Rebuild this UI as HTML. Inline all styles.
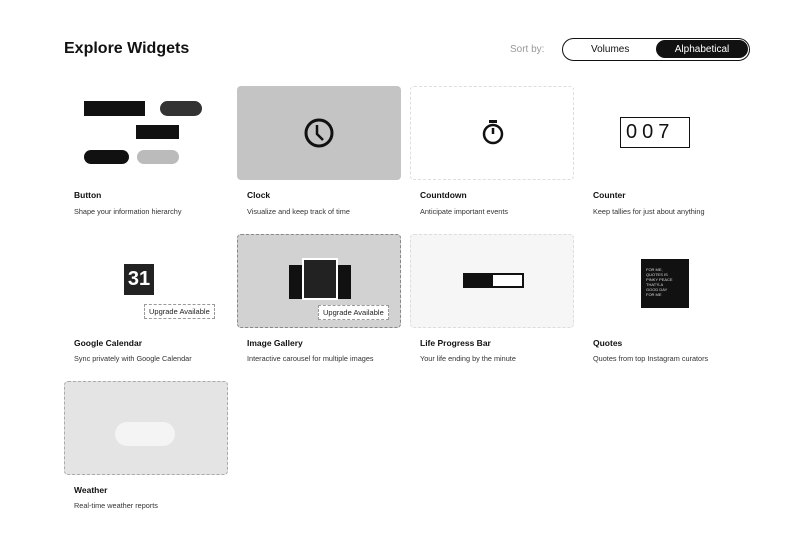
<!DOCTYPE html>
<html><head><meta charset="utf-8"><style>
*{margin:0;padding:0;box-sizing:border-box}
body{width:810px;height:546px;background:#fff;font-family:"Liberation Sans",sans-serif;color:#111;position:relative;overflow:hidden}
.abs{position:absolute}
h1{position:absolute;left:64px;top:40px;font-size:16px;font-weight:bold}
.sort{left:510px;top:44px;font-size:10px;color:#999}
.tog{left:562px;top:38px;width:188px;height:23px;border:1.5px solid #111;border-radius:12px}
.tog .v{position:absolute;left:28px;top:5px;font-size:10px}
.tog .a{position:absolute;right:1px;top:1px;width:92px;height:18px;background:#111;border-radius:10px;color:#fff;font-size:10px;text-align:center;line-height:19px}
.img{position:absolute;width:164px;height:94px;border-radius:4px}
.t{position:absolute;font-size:8.5px;font-weight:bold}
.d{position:absolute;font-size:7.3px;color:#333}
.up{position:absolute;background:#fff;border:1px dashed #999;font-size:7.5px;padding:2px 4px;color:#222}
</style></head><body>
<h1>Explore Widgets</h1>
<div class="abs sort">Sort by:</div>
<div class="abs tog"><span class="v">Volumes</span><span class="a">Alphabetical</span></div>

<!-- row1 -->
<div class="img" style="left:64px;top:86px">
 <div class="abs" style="left:20px;top:15px;width:61px;height:15px;background:#111"></div>
 <div class="abs" style="left:96px;top:15px;width:42px;height:15px;background:#333;border-radius:8px"></div>
 <div class="abs" style="left:72px;top:39px;width:43px;height:14px;background:#111"></div>
 <div class="abs" style="left:20px;top:64px;width:45px;height:14px;background:#111;border-radius:8px"></div>
 <div class="abs" style="left:73px;top:64px;width:42px;height:14px;background:#bbb;border-radius:8px"></div>
</div>
<div class="img" style="left:237px;top:86px;background:#c4c4c4">
 <svg class="abs" style="left:66px;top:30px" width="32" height="34" viewBox="0 0 32 34"><circle cx="16" cy="17" r="13" fill="none" stroke="#111" stroke-width="3"/><path d="M14 9v9l6 6" fill="none" stroke="#111" stroke-width="2.5"/></svg>
</div>
<div class="img" style="left:410px;top:86px;border:1px dashed #ddd">
 <svg class="abs" style="left:70px;top:32px" width="24" height="26" viewBox="0 0 24 26"><rect x="8" y="1" width="8" height="3" fill="#111"/><circle cx="12" cy="15" r="9" fill="none" stroke="#111" stroke-width="2.5"/><path d="M12 15V9" stroke="#111" stroke-width="2.5"/></svg>
</div>
<div class="img" style="left:583px;top:86px">
 <div class="abs" style="left:37px;top:31px;width:70px;height:31px;border:1.5px solid #111;font-size:20px;letter-spacing:5px;line-height:29px;padding-left:5px">007</div>
</div>
<div class="t" style="left:74px;top:190px">Button</div><div class="d" style="left:74px;top:207px">Shape your information hierarchy</div>
<div class="t" style="left:247px;top:190px">Clock</div><div class="d" style="left:247px;top:207px">Visualize and keep track of time</div>
<div class="t" style="left:420px;top:190px">Countdown</div><div class="d" style="left:420px;top:207px">Anticipate important events</div>
<div class="t" style="left:593px;top:190px">Counter</div><div class="d" style="left:593px;top:207px">Keep tallies for just about anything</div>

<!-- row2 -->
<div class="img" style="left:64px;top:234px">
 <div class="abs" style="left:60px;top:30px;width:30px;height:31px;background:#222;color:#fff;font-size:20px;font-weight:bold;text-align:center;line-height:31px">31</div>
 <div class="up" style="left:80px;top:70px">Upgrade Available</div>
</div>
<div class="img" style="left:237px;top:234px;background:#d2d2d2;border:1px dashed #888">
 <div class="abs" style="left:51px;top:30px;width:62px;height:34px;background:#111"></div>
 <div class="abs" style="left:64px;top:23px;width:36px;height:42px;background:#222;border:2px solid #fff"></div>
 <div class="up" style="left:80px;top:70px">Upgrade Available</div>
</div>
<div class="img" style="left:410px;top:234px;border:1px dashed #ddd;background:#f6f6f6">
 <div class="abs" style="left:52px;top:38px;width:61px;height:15px;border:2px solid #111;background:#fff"><div style="width:28px;height:100%;background:#111"></div></div>
</div>
<div class="img" style="left:583px;top:234px">
 <div class="abs" style="left:58px;top:25px;width:48px;height:49px;background:#111;color:#ddd;font-size:4px;padding:8px 5px;line-height:5px">FOR ME,<br>QUOTES IS<br>PINKY PEACE<br>THAT'S A<br>GOOD DAY<br>FOR ME</div>
</div>
<div class="t" style="left:74px;top:338px">Google Calendar</div><div class="d" style="left:74px;top:354px">Sync privately with Google Calendar</div>
<div class="t" style="left:247px;top:338px">Image Gallery</div><div class="d" style="left:247px;top:354px">Interactive carousel for multiple images</div>
<div class="t" style="left:420px;top:338px">Life Progress Bar</div><div class="d" style="left:420px;top:354px">Your life ending by the minute</div>
<div class="t" style="left:593px;top:338px">Quotes</div><div class="d" style="left:593px;top:354px">Quotes from top Instagram curators</div>

<!-- row3 -->
<div class="img" style="left:64px;top:381px;background:#e4e4e4;border:1px dashed #aaa">
 <div class="abs" style="left:50px;top:40px;width:60px;height:24px;background:#f4f4f4;border-radius:12px"></div>
</div>
<div class="t" style="left:74px;top:485px">Weather</div><div class="d" style="left:74px;top:501px">Real-time weather reports</div>
</body></html>
